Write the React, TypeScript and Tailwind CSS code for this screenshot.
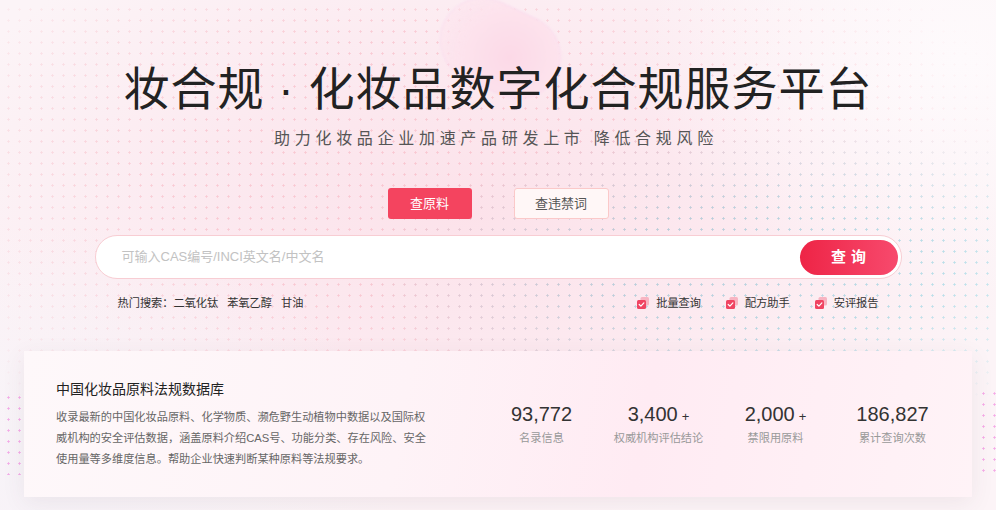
import React from "react";

function CheckIcon() {
  return (
    <svg width="12" height="12" viewBox="0 0 12 12" className="shrink-0">
      <rect x="3.5" y="0" width="8.5" height="8.5" rx="1.5" fill="#f8b4c2" />
      <rect x="0" y="3" width="9" height="9" rx="1.5" fill="#f04462" />
      <path
        d="M2.2 7.5 L3.9 9.1 L6.9 5.9"
        stroke="#fff"
        strokeWidth="1.2"
        fill="none"
        strokeLinecap="round"
        strokeLinejoin="round"
      />
    </svg>
  );
}

const stats = [
  { num: "93,772", plus: false, label: "名录信息" },
  { num: "3,400", plus: true, label: "权威机构评估结论" },
  { num: "2,000", plus: true, label: "禁限用原料" },
  { num: "186,827", plus: false, label: "累计查询次数" },
];

export default function App() {
  return (
    <div className="relative w-full h-[510px] overflow-hidden bg-[#fcf4f7] font-['Liberation_Sans','Noto_Sans_CJK_SC',sans-serif]">
      {/* background glows */}
      <div className="pointer-events-none absolute inset-0 bg-[radial-gradient(ellipse_560px_320px_at_470px_210px,#fce2ea_0%,rgba(252,228,236,0.7)_45%,rgba(252,228,236,0)_100%)]" />
      <div className="pointer-events-none absolute inset-0 bg-[radial-gradient(ellipse_320px_240px_at_960px_60px,#fefafc_0%,rgba(254,250,252,0)_100%)]" />
      <div className="pointer-events-none absolute inset-0 bg-[radial-gradient(ellipse_360px_260px_at_40px_480px,#f7f3f8_0%,rgba(247,243,248,0)_100%)]" />
      {/* pink dots */}
      <div className="pointer-events-none absolute inset-0 bg-[radial-gradient(circle,rgba(244,150,165,0.38)_0.9px,transparent_1.3px)] [background-size:11px_11px] [background-position:3px_4px] [mask-image:radial-gradient(ellipse_620px_330px_at_420px_170px,black_40%,transparent_100%)]" />
      {/* cyan dots */}
      <div className="pointer-events-none absolute inset-0 bg-[radial-gradient(circle,rgba(120,210,225,0.5)_0.9px,transparent_1.3px)] [background-size:11px_11px] [background-position:3px_4px] [mask-image:radial-gradient(ellipse_420px_150px_at_780px_270px,black_40%,transparent_100%)]" />
      {/* blob */}
      <div className="pointer-events-none absolute left-[438px] top-[6px] w-[125px] h-[85px] rounded-full rotate-[25deg] bg-[radial-gradient(circle_at_60%_55%,#fcd9e7_0%,#fde3ed_55%,rgba(252,227,237,0.2)_100%)] border border-[#f7d6ee]/60 blur-[1px]" />
      {/* magenta dots beside card */}
      <div className="pointer-events-none absolute left-0 top-[390px] w-[24px] h-[85px] bg-[radial-gradient(circle,rgba(240,120,220,0.6)_0.9px,transparent_1.3px)] [background-size:11px_11px] [background-position:3px_2px]" />
      <div className="pointer-events-none absolute left-[976px] top-[386px] w-[20px] h-[90px] bg-[radial-gradient(circle,rgba(240,120,220,0.6)_0.9px,transparent_1.3px)] [background-size:11px_11px] [background-position:2px_2px]" />

      <div className="relative flex flex-col items-center">
        <h1 className="mt-[61px] text-[46px] leading-[56px] tracking-[1px] text-[#222] font-normal whitespace-nowrap">
          妆合规 · 化妆品数字化合规服务平台
        </h1>
        <p className="mt-[10px] text-[16px] leading-[24px] tracking-[4.7px] text-[#555] whitespace-nowrap pr-[4px]">
          助力化妆品企业加速产品研发上市 降低合规风险
        </p>

        <div className="mt-[37px] flex gap-[42px]">
          <button className="w-[84px] h-[31px] rounded-[3px] bg-[#f4445f] text-white text-[13px]">
            查原料
          </button>
          <button className="w-[95px] h-[31px] rounded-[3px] bg-[#fff7f7] border border-[#fbc9c9] text-[#555] text-[13px]">
            查违禁词
          </button>
        </div>

        <div className="mt-[16px] w-[807px] h-[44px] rounded-full bg-white border border-[#f8cdd3] flex items-center pl-[26px] pr-[3px]">
          <span className="flex-1 text-[13px] text-[#c2c2c2]">
            可输入CAS编号/INCI英文名/中文名
          </span>
          <button className="w-[98px] h-[35px] rounded-full bg-[linear-gradient(90deg,#ee2446,#f74a6d)] text-white text-[15px] font-bold tracking-[5px] pl-[5px]">
            查询
          </button>
        </div>

        <div className="mt-[16px] w-[807px] px-[23px] flex items-center justify-between text-[11.2px] leading-[16px] text-[#333]">
          <div className="flex items-center">
            <span>热门搜索：</span>
            <span>二氧化钛</span>
            <span className="ml-[9px]">苯氧乙醇</span>
            <span className="ml-[9px]">甘油</span>
          </div>
          <div className="flex items-center gap-[25px]">
            {["批量查询", "配方助手", "安评报告"].map((t) => (
              <div key={t} className="flex items-center gap-[7px]">
                <CheckIcon />
                <span>{t}</span>
              </div>
            ))}
          </div>
        </div>

        <div className="mt-[40px] w-[948px] h-[146px] flex items-center bg-[linear-gradient(100deg,#fef8fa_0%,#fef3f7_40%,#ffebf3_65%,#fff3f7_100%)] shadow-[0_6px_22px_rgba(90,60,80,0.08)]">
          <div className="ml-[32px] w-[374px]">
            <h2 className="text-[14px] leading-[20px] text-[#222] font-normal">
              中国化妆品原料法规数据库
            </h2>
            <p className="mt-[8px] text-[11.2px] leading-[21px] text-[#666]">
              收录最新的中国化妆品原料、化学物质、濒危野生动植物中数据以及国际权威机构的安全评估数据，涵盖原料介绍CAS号、功能分类、存在风险、安全使用量等多维度信息。帮助企业快速判断某种原料等法规要求。
            </p>
          </div>
          <div className="ml-auto mr-[21px] grid grid-cols-4 w-[468px]">
            {stats.map((s) => (
              <div key={s.label} className="flex flex-col items-center">
                <div className="flex items-baseline text-[#333]">
                  <span className="text-[20px] leading-[24px]">{s.num}</span>
                  {s.plus && <span className="ml-[4px] text-[13px]">+</span>}
                </div>
                <span className="mt-[4px] text-[11.2px] leading-[16px] text-[#999]">
                  {s.label}
                </span>
              </div>
            ))}
          </div>
        </div>
      </div>
    </div>
  );
}
